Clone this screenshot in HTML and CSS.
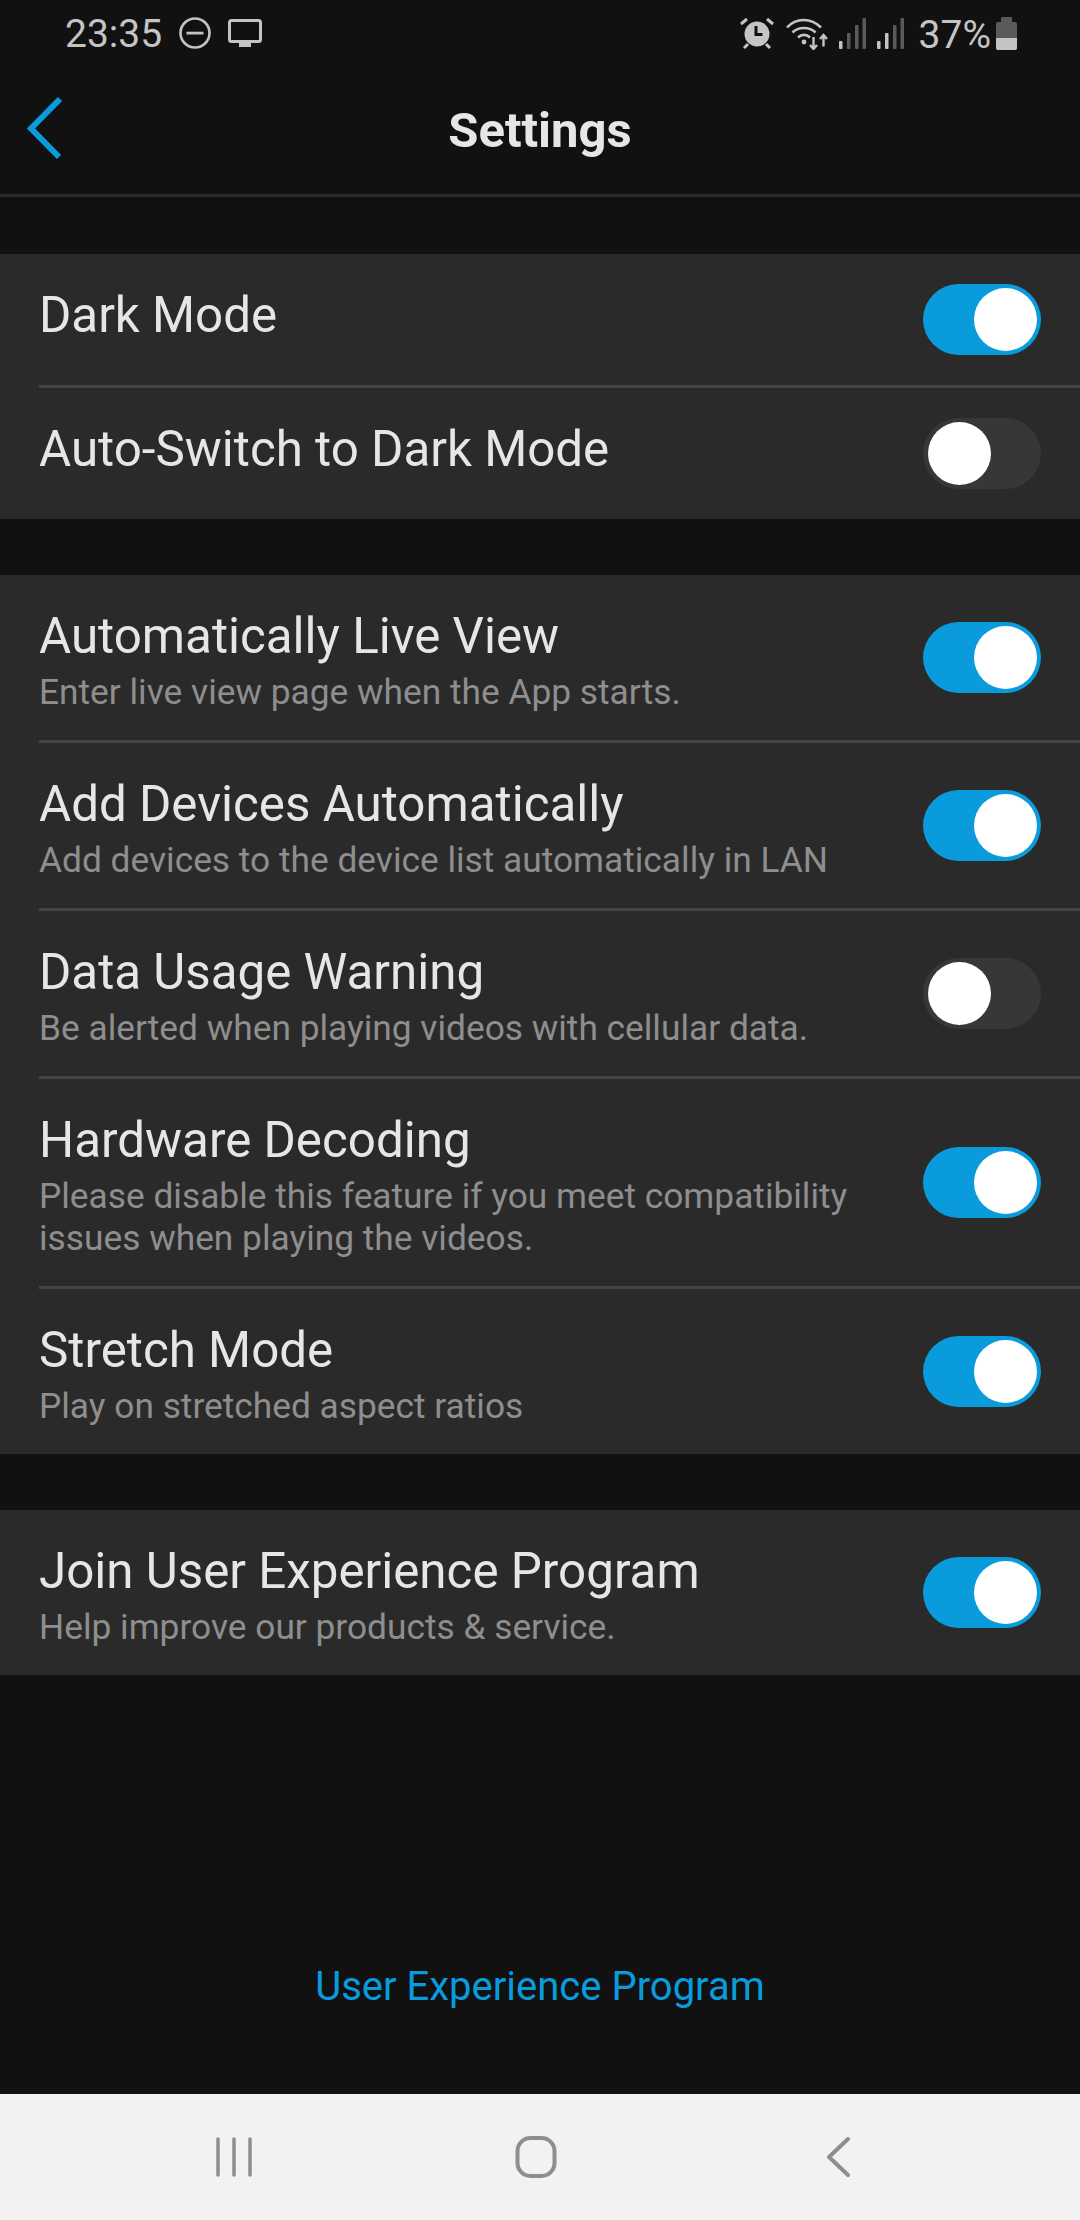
FILE: index.html
```html
<!DOCTYPE html>
<html>
<head>
  <meta charset="utf-8">
  <title>Settings</title>
  <link rel="stylesheet" href="styles.css">
</head>
<body>
  <div class="screen">
    <div class="status-bar">
      <div class="status-left">
        <span class="clock">23:35</span>
        <svg class="ic-dnd" width="32" height="32" viewBox="0 0 32 32"><circle cx="16" cy="16" r="14.500" fill="none" stroke="#c4c4c4" stroke-width="2.600"/><rect x="7.500" y="14.700" width="17" height="2.800" fill="#c4c4c4"/></svg>
        <svg class="ic-tv" width="34" height="28" viewBox="0 0 34 28"><rect x="1.500" y="1.500" width="31" height="21" rx="2" fill="none" stroke="#c4c4c4" stroke-width="3"/><rect x="11" y="24" width="12" height="4" fill="#c4c4c4"/></svg>
      </div>
      <div class="status-right">
        <svg class="ic-alarm" width="34" height="32" viewBox="0 0 34 32">
          <circle cx="17" cy="17" r="12.500" fill="#c4c4c4"/>
          <path d="M16 9v8.500h6.500" fill="none" stroke="#111" stroke-width="3"/>
          <path d="M1 7l6-5M33 7l-6-5M8 27l-4 4M26 27l4 4" stroke="#c4c4c4" stroke-width="3" fill="none"/>
        </svg>
        <svg class="ic-wifi" width="42" height="33" viewBox="0 0 42 33">
          <path d="M1 10.500C10 0.500 25 0.500 35 10.500M6.500 15.500c6-6 17-6 23 0M12 20.500c3.500-3.500 8.500-3.500 12 0" fill="none" stroke="#c4c4c4" stroke-width="2.600"/>
          <circle cx="18" cy="25" r="2.400" fill="#c4c4c4"/>
          <path d="M27.500 20v11.500M24 28l3.500 4 3.500-4M37.500 29.500V18M34 22l3.500-4 3.500 4" fill="none" stroke="#c4c4c4" stroke-width="2.400"/>
        </svg>
        <svg class="ic-signal" width="27" height="31" viewBox="0 0 27 31">
          <rect x="0" y="23" width="3.500" height="8" rx="1" fill="#c4c4c4"/>
          <rect x="8" y="15" width="3.500" height="16" rx="1" fill="#5a5a5a"/>
          <rect x="16" y="7" width="3.500" height="24" rx="1" fill="#5a5a5a"/>
          <rect x="23.500" y="0" width="3.500" height="31" rx="1" fill="#5a5a5a"/>
        </svg>
        <svg class="ic-signal" width="27" height="31" viewBox="0 0 27 31">
          <rect x="0" y="23" width="3.500" height="8" rx="1" fill="#c4c4c4"/>
          <rect x="8" y="15" width="3.500" height="16" rx="1" fill="#c4c4c4"/>
          <rect x="16" y="7" width="3.500" height="24" rx="1" fill="#5a5a5a"/>
          <rect x="23.500" y="0" width="3.500" height="31" rx="1" fill="#5a5a5a"/>
        </svg>
        <span class="battery-pct">37%</span>
        <svg class="ic-battery" width="21" height="33" viewBox="0 0 21 33">
          <path d="M6 0h9a1 1 0 0 1 1 1v4h3a2 2 0 0 1 2 2v24a2 2 0 0 1-2 2H2a2 2 0 0 1-2-2V7a2 2 0 0 1 2-2h3V1a1 1 0 0 1 1-1z" fill="#5a5a5a"/>
          <path d="M0 21h21v10a2 2 0 0 1-2 2H2a2 2 0 0 1-2-2z" fill="#c4c4c4"/>
        </svg>
      </div>
    </div>

    <div class="title-bar">
      <svg class="back" width="40" height="64" viewBox="0 0 40 64"><path d="M35 3L6 32.500 34 61" fill="none" stroke="#0a9bdc" stroke-width="6"/></svg>
      <h1>Settings</h1>
    </div>

    <div class="group">
      <div class="row row-short">
        <div class="row-text"><div class="row-title">Dark Mode</div></div>
        <div class="switch on"></div>
      </div>
      <div class="row row-short">
        <div class="row-text"><div class="row-title">Auto-Switch to Dark Mode</div></div>
        <div class="switch"></div>
      </div>
    </div>

    <div class="group">
      <div class="row">
        <div class="row-text">
          <div class="row-title">Automatically Live View</div>
          <div class="row-sub">Enter live view page when the App starts.</div>
        </div>
        <div class="switch on"></div>
      </div>
      <div class="row">
        <div class="row-text">
          <div class="row-title">Add Devices Automatically</div>
          <div class="row-sub">Add devices to the device list automatically in LAN</div>
        </div>
        <div class="switch on"></div>
      </div>
      <div class="row">
        <div class="row-text">
          <div class="row-title">Data Usage Warning</div>
          <div class="row-sub">Be alerted when playing videos with cellular data.</div>
        </div>
        <div class="switch"></div>
      </div>
      <div class="row">
        <div class="row-text">
          <div class="row-title">Hardware Decoding</div>
          <div class="row-sub">Please disable this feature if you meet compatibility<br>issues when playing the videos.</div>
        </div>
        <div class="switch on"></div>
      </div>
      <div class="row">
        <div class="row-text">
          <div class="row-title">Stretch Mode</div>
          <div class="row-sub">Play on stretched aspect ratios</div>
        </div>
        <div class="switch on"></div>
      </div>
    </div>

    <div class="group">
      <div class="row">
        <div class="row-text">
          <div class="row-title">Join User Experience Program</div>
          <div class="row-sub">Help improve our products &amp; service.</div>
        </div>
        <div class="switch on"></div>
      </div>
    </div>

    <div class="footer-link">User Experience Program</div>

    <div class="nav-bar">
      <svg width="44" height="44" viewBox="0 0 44 44"><path d="M6 4v36M22 4v36M38 4v36" fill="none" stroke="#8e8e8e" stroke-width="3.500" stroke-linecap="round"/></svg>
      <svg width="44" height="44" viewBox="0 0 44 44"><rect x="3.500" y="3" width="37" height="38" rx="13" fill="none" stroke="#8e8e8e" stroke-width="4"/></svg>
      <svg width="44" height="44" viewBox="0 0 44 44"><path d="M28 4L9 22l19 18" fill="none" stroke="#8e8e8e" stroke-width="4" stroke-linecap="round" stroke-linejoin="round"/></svg>
    </div>
  </div>
</body>
</html>
```

FILE: styles.css
```css
* {
  box-sizing: border-box;
}

html, body {
  margin: 0;
  padding: 0;
}

body {
  background: #111;
  font-family: Roboto, "Liberation Sans", sans-serif;
}

.screen {
  width: 1080px;
  height: 2220px;
  display: flex;
  flex-direction: column;
  background: #111;
}

.status-bar {
  height: 66px;
  display: flex;
  justify-content: space-between;
  align-items: center;
  padding: 0 63px 0 65px;
  color: #c4c4c4;
}

.status-left, .status-right {
  display: flex;
  align-items: center;
}

.clock {
  font-size: 39px;
  margin-top: 2px;
  margin-right: 17px;
}

.ic-dnd {
  margin-right: 17px;
}

.ic-wifi {
  margin-left: 12px;
}

.ic-signal {
  margin-left: 11px;
}

.battery-pct {
  font-size: 39px;
  margin-top: 4px;
  margin-left: 15px;
  margin-right: 5px;
}

.title-bar {
  position: relative;
  height: 131px;
  display: flex;
  align-items: center;
  justify-content: center;
  border-bottom: 3px solid #2a2a2a;
  margin-bottom: 57px;
}

.back {
  position: absolute;
  left: 25px;
  top: 30px;
}

.title-bar h1 {
  margin: 0;
  font-size: 49px;
  font-weight: 700;
  color: #e6e6e6;
}

.group {
  background: #2a2a2a;
  margin-bottom: 56px;
}

.row {
  margin-left: 39px;
  padding: 33px 39px 27px 0;
  display: flex;
  align-items: center;
  justify-content: space-between;
  border-top: 3px solid #444;
}

.row:first-child {
  border-top: none;
}

.row-short {
  height: 134px;
  padding-top: 0;
  padding-bottom: 0;
}

.row-short:first-child {
  height: 131px;
}

.row-short .row-title {
  margin-bottom: 9px;
}

.row-title {
  font-size: 49.3px;
  color: #e6e6e6;
  line-height: 56px;
}

.row-sub {
  font-size: 35.3px;
  color: #8e8e8e;
  line-height: 42px;
  margin-top: 7px;
}

.switch {
  position: relative;
  width: 118px;
  height: 71px;
  margin-top: -6px;
  border-radius: 36px;
  background: #37373a;
  flex-shrink: 0;
}

.row-short .switch {
  margin-top: 0;
}

.switch:after {
  content: '';
  position: absolute;
  top: 4px;
  left: 5px;
  width: 63px;
  height: 63px;
  border-radius: 50%;
  background: #fff;
}

.switch.on {
  background: #0a9bdc;
}

.switch.on:after {
  left: 51px;
}

.footer-link {
  margin-top: auto;
  margin-bottom: 84px;
  text-align: center;
  font-size: 40px;
  color: #0a9bdc;
}

.nav-bar {
  height: 126px;
  background: #f2f2f2;
  display: flex;
  align-items: center;
  padding-left: 212px;
}

.nav-bar svg:nth-child(2) {
  margin-left: 258px;
}

.nav-bar svg:nth-child(3) {
  margin-left: 262px;
}
```
